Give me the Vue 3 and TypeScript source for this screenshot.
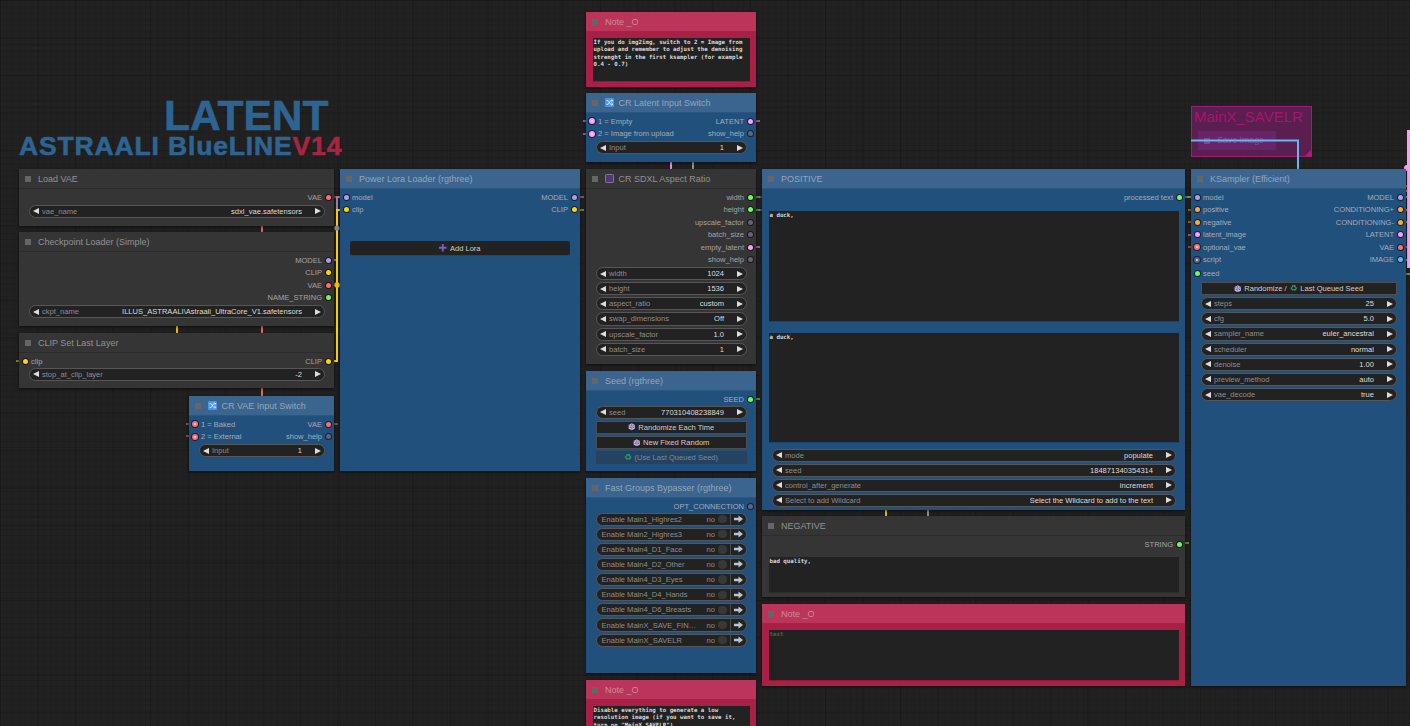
<script setup lang="ts">
type Slot = [string, string, boolean?]
type Row =
  | { k: 'slot'; i?: Slot; o?: Slot; mt?: number }
  | { k: 'gap'; h: number }
  | { k: 'w'; l: string; v: string }
  | { k: 'btn'; parts: string[]; off?: boolean }
  | { k: 'tog'; l: string }
  | { k: 'text'; t: string; h: number; mt: number; dim?: boolean }
  | { k: 'lora' }
interface GraphNode {
  x: number
  y: number
  w: number
  h: number
  title: string
  theme: 'grey' | 'blue' | 'red'
  icon?: 'shuffle' | 'square'
  rows: Row[]
}

const PUR = '#b39ddb'
const YEL = '#ffd500'
const RED = '#ff6e6e'
const GRN = '#6dfa5e'
const PNK = '#ff9cf9'
const ORG = '#ffa931'
const BLU = '#64b5f6'
const GRY = '#62627a'

const nodes: GraphNode[] = [
  { x: 19, y: 169, w: 315, h: 57, title: 'Load VAE', theme: 'grey', rows: [
    { k: 'slot', o: ['VAE', RED] },
    { k: 'w', l: 'vae_name', v: 'sdxl_vae.safetensors' } ] },
  { x: 19, y: 232, w: 315, h: 94, title: 'Checkpoint Loader (Simple)', theme: 'grey', rows: [
    { k: 'slot', o: ['MODEL', PUR] },
    { k: 'slot', o: ['CLIP', YEL] },
    { k: 'slot', o: ['VAE', RED] },
    { k: 'slot', o: ['NAME_STRING', GRN] },
    { k: 'w', l: 'ckpt_name', v: 'ILLUS_ASTRAALI\\Astraali_UltraCore_V1.safetensors' } ] },
  { x: 19, y: 333, w: 315, h: 55, title: 'CLIP Set Last Layer', theme: 'grey', rows: [
    { k: 'slot', i: ['clip', YEL], o: ['CLIP', YEL] },
    { k: 'gap', h: -1 },
    { k: 'w', l: 'stop_at_clip_layer', v: '-2' } ] },
  { x: 189, y: 396, w: 145, h: 75, title: 'CR VAE Input Switch', theme: 'blue', icon: 'shuffle', rows: [
    { k: 'slot', i: ['1 = Baked', RED, true], o: ['VAE', RED] },
    { k: 'slot', i: ['2 = External', RED, true], o: ['show_help', GRY] },
    { k: 'w', l: 'Input', v: '1' } ] },
  { x: 340, y: 169, w: 240, h: 302, title: 'Power Lora Loader (rgthree)', theme: 'blue', rows: [
    { k: 'slot', i: ['model', PUR], o: ['MODEL', PUR] },
    { k: 'slot', i: ['clip', YEL], o: ['CLIP', YEL] },
    { k: 'lora' } ] },
  { x: 586, y: 12, w: 170, h: 75, title: 'Note _O', theme: 'red', rows: [
    { k: 'text', mt: 4, h: 43, t: 'If you do img2img, switch to 2 = Image from upload and remember to adjust the denoising strenght in the first ksampler (for example 0.4 - 0.7)' } ] },
  { x: 586, y: 93, w: 170, h: 69, title: 'CR Latent Input Switch', theme: 'blue', icon: 'shuffle', rows: [
    { k: 'slot', i: ['1 = Empty', PNK, true], o: ['LATENT', PNK] },
    { k: 'slot', i: ['2 = Image from upload', PNK, true], o: ['show_help', GRY] },
    { k: 'w', l: 'Input', v: '1' } ] },
  { x: 586, y: 169, w: 170, h: 195, title: 'CR SDXL Aspect Ratio', theme: 'grey', icon: 'square', rows: [
    { k: 'slot', o: ['width', GRN] },
    { k: 'slot', o: ['height', GRN] },
    { k: 'slot', o: ['upscale_factor', GRY] },
    { k: 'slot', o: ['batch_size', GRY] },
    { k: 'slot', o: ['empty_latent', PNK] },
    { k: 'slot', o: ['show_help', GRY] },
    { k: 'w', l: 'width', v: '1024' },
    { k: 'w', l: 'height', v: '1536' },
    { k: 'w', l: 'aspect_ratio', v: 'custom' },
    { k: 'w', l: 'swap_dimensions', v: 'Off' },
    { k: 'w', l: 'upscale_factor', v: '1.0' },
    { k: 'w', l: 'batch_size', v: '1' } ] },
  { x: 586, y: 371, w: 170, h: 100, title: 'Seed (rgthree)', theme: 'blue', rows: [
    { k: 'slot', o: ['SEED', GRN] },
    { k: 'gap', h: -1 },
    { k: 'w', l: 'seed', v: '770310408238849' },
    { k: 'btn', parts: ['dice', 'Randomize Each Time'] },
    { k: 'btn', parts: ['dice', 'New Fixed Random'] },
    { k: 'btn', parts: ['recycle', '(Use Last Queued Seed)'], off: true } ] },
  { x: 586, y: 478, w: 170, h: 195, title: 'Fast Groups Bypasser (rgthree)', theme: 'blue', rows: [
    { k: 'slot', o: ['OPT_CONNECTION', GRY] },
    { k: 'gap', h: -1 },
    { k: 'tog', l: 'Enable Main1_Highres2' },
    { k: 'tog', l: 'Enable Main2_Highres3' },
    { k: 'tog', l: 'Enable Main4_D1_Face' },
    { k: 'tog', l: 'Enable Main4_D2_Other' },
    { k: 'tog', l: 'Enable Main4_D3_Eyes' },
    { k: 'tog', l: 'Enable Main4_D4_Hands' },
    { k: 'tog', l: 'Enable Main4_D6_Breasts' },
    { k: 'tog', l: 'Enable MainX_SAVE_FIN…' },
    { k: 'tog', l: 'Enable MainX_SAVELR' } ] },
  { x: 586, y: 680, w: 170, h: 75, title: 'Note _O', theme: 'red', rows: [
    { k: 'text', mt: 4, h: 43, t: 'Disable everything to generate a low resolution image (if you want to save it, turn on "MainX_SAVELR")' } ] },
  { x: 762, y: 169, w: 423, h: 341, title: 'POSITIVE', theme: 'blue', rows: [
    { k: 'slot', o: ['processed text', GRN] },
    { k: 'text', mt: 7.5, h: 110, t: 'a duck,' },
    { k: 'text', mt: 12, h: 109, t: 'a duck,' },
    { k: 'gap', h: 5.5 },
    { k: 'w', l: 'mode', v: 'populate' },
    { k: 'w', l: 'seed', v: '184871340354314' },
    { k: 'w', l: 'control_after_generate', v: 'increment' },
    { k: 'w', l: 'Select to add Wildcard', v: 'Select the Wildcard to add to the text' } ] },
  { x: 762, y: 516, w: 423, h: 81, title: 'NEGATIVE', theme: 'grey', rows: [
    { k: 'slot', o: ['STRING', GRN] },
    { k: 'text', mt: 6.5, h: 35, t: 'bad quality,' } ] },
  { x: 762, y: 604, w: 423, h: 82, title: 'Note _O', theme: 'red', rows: [
    { k: 'text', mt: 4, h: 50, t: 'text', dim: true } ] },
  { x: 1191, y: 169, w: 215, h: 517, title: 'KSampler (Efficient)', theme: 'blue', rows: [
    { k: 'slot', i: ['model', PUR], o: ['MODEL', PUR] },
    { k: 'slot', i: ['positive', ORG], o: ['CONDITIONING+', ORG] },
    { k: 'slot', i: ['negative', ORG], o: ['CONDITIONING-', ORG] },
    { k: 'slot', i: ['latent_image', PNK], o: ['LATENT', PNK] },
    { k: 'slot', i: ['optional_vae', RED, true], o: ['VAE', RED] },
    { k: 'slot', i: ['script', GRY, true], o: ['IMAGE', BLU] },
    { k: 'slot', i: ['seed', GRN], mt: 1.5 },
    { k: 'gap', h: 1 },
    { k: 'btn', parts: ['dice', 'Randomize /', 'recycle', 'Last Queued Seed'] },
    { k: 'w', l: 'steps', v: '25' },
    { k: 'w', l: 'cfg', v: '5.0' },
    { k: 'w', l: 'sampler_name', v: 'euler_ancestral' },
    { k: 'w', l: 'scheduler', v: 'normal' },
    { k: 'w', l: 'denoise', v: '1.00' },
    { k: 'w', l: 'preview_method', v: 'auto' },
    { k: 'w', l: 'vae_decode', v: 'true' } ] },
]

const wires: { d: string; c: string; w: number }[] = [
  { d: 'M334 260H337V197H340', c: PUR, w: 1.6 },
  { d: 'M334 361H337V210H340', c: YEL, w: 2 },
  { d: 'M262 226V232M262 326V333M262 388V396', c: RED, w: 1.8 },
  { d: 'M177 326V333', c: YEL, w: 1.8 },
  { d: 'M671 162V169', c: PNK, w: 1.8 },
  { d: 'M693 162V169', c: '#9aa89a', w: 1.8 },
  { d: 'M886 510V516', c: YEL, w: 1.8 },
  { d: 'M928 510V516', c: '#9aa89a', w: 1.8 },
  { d: 'M1191 140.5H1298V169', c: BLU, w: 2 },
  { d: 'M334 197H339', c: RED, w: 1 },
  { d: 'M186 424H189M186 436H189', c: RED, w: 1 },
  { d: 'M16 361H19', c: YEL, w: 1 },
  { d: 'M334 424H338', c: '#999', w: 1 },
  { d: 'M580 197H584', c: '#aaa', w: 1 },
  { d: 'M580 210H584', c: YEL, w: 1 },
  { d: 'M583 121H586M583 134H586M756 121H760M756 247H760', c: PNK, w: 1 },
  { d: 'M756 197H760M756 210H760M756 399H760M1185 197H1191M1185 543H1189', c: GRN, w: 1 },
  { d: 'M759 197H762M759 210H762', c: '#888', w: 1 },
  { d: 'M1188 197H1191', c: PUR, w: 1 },
  { d: 'M1188 210H1191M1188 222H1191', c: ORG, w: 1 },
  { d: 'M1188 235H1191', c: PNK, w: 1 },
  { d: 'M1188 247H1191', c: RED, w: 1 },
  { d: 'M1406 197H1410', c: PUR, w: 1.6 },
  { d: 'M1406 210H1410M1406 222H1410', c: ORG, w: 1.6 },
  { d: 'M1406 247H1410', c: RED, w: 1.6 },
  { d: 'M1406 260H1410', c: BLU, w: 1.6 },
  { d: 'M1406 274H1410', c: '#8a9a8a', w: 1.6 },
  { d: 'M1406 186H1410', c: RED, w: 1.4 },
  { d: 'M1406 191H1410', c: ORG, w: 1.4 },
  { d: 'M1408.5 130V268', c: PNK, w: 3 },
]

function pos(n: GraphNode) {
  return { left: n.x + 'px', top: n.y + 'px', width: n.w + 'px', height: n.h + 'px' }
}
</script>

<template>
  <div class="canvas">
    <div class="label latent">LATENT</div>
    <div class="label brand">ASTRAALI BlueLINE<span class="ver">V14</span></div>

    <div class="group">
      <div class="group-title">MainX_SAVELR</div>
      <div class="ghost"><i class="ghost-box"></i>Save Image</div>
      <i class="corner"></i>
    </div>

    <svg class="wires" width="1410" height="726" viewBox="0 0 1410 726" fill="none">
      <path v-for="(w, i) in wires" :key="i" :d="w.d" :stroke="w.c" :stroke-width="w.w" />
      <circle cx="337" cy="228" r="2.6" fill="#8f80b0" />
      <circle cx="337" cy="285" r="2.8" fill="#ffc400" />
      <circle cx="1407" cy="168" r="3" fill="#ff9cf9" />
    </svg>

    <section v-for="(n, ni) in nodes" :key="ni" class="node" :class="n.theme" :style="pos(n)">
      <header class="title">
        <i class="box"></i>
        <svg v-if="n.icon === 'shuffle'" class="ticon" viewBox="0 0 10 10">
          <rect width="10" height="10" rx="1.2" fill="#4f94e0" />
          <path d="M1.5 3H3.5L6.3 7H8.5M1.5 7H3.5L6.3 3H8.5M7.3 1.8L8.7 3L7.3 4.2M7.3 5.8L8.7 7L7.3 8.2" stroke="#e8f2ff" stroke-width=".9" fill="none" />
        </svg>
        <svg v-if="n.icon === 'square'" class="ticon" viewBox="0 0 10 10">
          <rect x=".5" y=".5" width="9" height="9" rx="1" fill="#4c3a70" stroke="#8d7fa6" />
        </svg>
        <span class="tname">{{ n.title }}</span>
      </header>
      <div class="body">
        <template v-for="(r, ri) in n.rows" :key="ri">
          <div v-if="r.k === 'slot'" class="slot" :style="r.mt ? { marginTop: r.mt + 'px' } : undefined">
            <span v-if="r.i" class="side">
              <i class="dot" :class="{ ring: r.i[2] }" :style="{ '--c': r.i[1] }"></i>{{ r.i[0] }}
            </span>
            <span v-if="r.o" class="side end">
              {{ r.o[0] }}<i class="dot" :style="{ '--c': r.o[1] }"></i>
            </span>
          </div>

          <div v-else-if="r.k === 'gap'" class="gap" :style="{ marginTop: r.h + 'px' }"></div>

          <div v-else-if="r.k === 'w'" class="wrow">
            <div class="pill">
              <i class="tri left"></i>
              <span class="wl">{{ r.l }}</span>
              <span class="wv">{{ r.v }}</span>
              <i class="tri right"></i>
            </div>
          </div>

          <div v-else-if="r.k === 'btn'" class="wrow">
            <div class="btn" :class="{ off: r.off }">
              <template v-for="(p, pi) in r.parts" :key="pi">
                <svg v-if="p === 'dice'" class="dice" viewBox="0 0 8 8">
                  <path d="M4 .3L7.3 2V6L4 7.7L.7 6V2Z" fill="#c6b6e6" />
                  <path d="M4 4V7.7M.7 2L4 4L7.3 2" stroke="#6d5a90" stroke-width=".6" fill="none" />
                  <circle cx="4" cy="2" r=".6" fill="#4b3a6d" />
                  <circle cx="2.3" cy="4.6" r=".6" fill="#4b3a6d" />
                  <circle cx="5.7" cy="4.6" r=".6" fill="#4b3a6d" />
                </svg>
                <span v-else-if="p === 'recycle'" class="recycle">♻</span>
                <span v-else>{{ p }}</span>
              </template>
            </div>
          </div>

          <div v-else-if="r.k === 'tog'" class="wrow">
            <div class="pill tog">
              <span class="tl">{{ r.l }}</span>
              <span class="tno">no</span>
              <i class="knob"></i>
              <i class="sep"></i>
              <svg class="arrow" viewBox="0 0 10 8">
                <path d="M0 2.6H5V0L10 4L5 8V5.4H0Z" fill="#b4c6da" />
              </svg>
            </div>
          </div>

          <div
            v-else-if="r.k === 'text'"
            class="area"
            :class="{ dim: r.dim }"
            :style="{ height: r.h + 'px', marginTop: r.mt + 'px' }"
          >{{ r.t }}</div>

          <div v-else class="lora">
            <svg class="plus" viewBox="0 0 8 8"><path d="M3 0H5V3H8V5H5V8H3V5H0V3H3Z" fill="#7b5fc0" /></svg>
            Add Lora
          </div>
        </template>
      </div>
    </section>
  </div>
</template>

<style scoped>
.canvas {
  position: relative;
  width: 1410px;
  height: 726px;
  overflow: hidden;
  font-family: "Liberation Sans", Arial, sans-serif;
  font-size: 7.56px;
  background-color: #212121;
  background-image:
    linear-gradient(to right, rgba(0, 0, 0, 0.16) 1px, transparent 1px),
    linear-gradient(to bottom, rgba(0, 0, 0, 0.16) 1px, transparent 1px),
    linear-gradient(to right, rgba(0, 0, 0, 0.08) 1px, transparent 1px),
    linear-gradient(to bottom, rgba(0, 0, 0, 0.08) 1px, transparent 1px);
  background-size: 37.5px 37.5px, 37.5px 37.5px, 6.3px 6.3px, 6.3px 6.3px;
}
.label {
  position: absolute;
  font-weight: 700;
  white-space: nowrap;
  color: #2e6491;
  line-height: 0.75;
  -webkit-text-stroke: 0.6px currentColor;
}
.latent {
  left: 164px;
  top: 100px;
  font-size: 42.5px;
}
.brand {
  left: 19px;
  top: 137px;
  font-size: 26.5px;
  letter-spacing: 0.85px;
}
.ver {
  color: #a8243f;
}
.group {
  position: absolute;
  left: 1191px;
  top: 106px;
  width: 121px;
  height: 51px;
  box-sizing: border-box;
  border: 1px solid #9d1f70;
  background: #5a1e50;
}
.group-title {
  color: #a3186f;
  font-size: 15px;
  line-height: 19px;
  padding-left: 2px;
}
.ghost {
  position: absolute;
  left: 6px;
  top: 24px;
  width: 78px;
  height: 19px;
  background: #682468;
  color: #85548c;
  font-size: 8.8px;
  line-height: 19px;
  display: flex;
  align-items: center;
  gap: 7px;
  padding-left: 6px;
  box-sizing: border-box;
}
.ghost-box {
  width: 6px;
  height: 6px;
  background: #7a4a80;
}
.corner {
  position: absolute;
  right: 0;
  bottom: 0;
  border-style: solid;
  border-width: 0 0 6px 6px;
  border-color: transparent transparent #b5187c transparent;
}
.wires {
  position: absolute;
  left: 0;
  top: 0;
}
.node {
  position: absolute;
  box-shadow: 0 1px 3px rgba(0, 0, 0, 0.6);
  color: #a4a4a4;
  --tbg: #353535;
  --bbg: #353535;
  --line: #2c2c2c;
  --tc: #929292;
}
.node.blue {
  --tbg: #3b658f;
  --bbg: #22507c;
  --line: #2a567f;
  --tc: #94a6b8;
  color: #a2acb8;
}
.node.red {
  --tbg: #bb3459;
  --bbg: #a82046;
  --line: #a12646;
  --tc: #d08a9c;
}
.title {
  height: 19px;
  border-bottom: 1px solid var(--line);
  background: var(--tbg);
  color: var(--tc);
  display: flex;
  align-items: center;
  font-size: 9px;
  padding-left: 6px;
  white-space: nowrap;
}
.box {
  width: 6px;
  height: 6px;
  background: #666;
  flex: none;
  margin-right: 7px;
}
.ticon {
  width: 9px;
  height: 9px;
  flex: none;
  margin-right: 4.5px;
}
.body {
  background: var(--bbg);
  height: calc(100% - 20px);
  padding-top: 2px;
  box-sizing: border-box;
  display: flex;
  flex-direction: column;
}
.gap {
  flex: none;
}
.slot {
  height: 12.5px;
  flex: none;
  display: flex;
  align-items: center;
  justify-content: space-between;
  padding: 0 3.5px;
}
.side {
  display: flex;
  align-items: center;
  gap: 3.5px;
  white-space: nowrap;
}
.end {
  margin-left: auto;
}
.dot {
  width: 5px;
  height: 5px;
  border-radius: 50%;
  background: var(--c);
  box-shadow: 0 0 0 1px rgba(0, 0, 0, 0.55);
  flex: none;
}
.dot.ring {
  width: 6px;
  height: 6px;
  margin: 0 -0.5px;
  background: #e8dcdc;
  box-sizing: border-box;
  border: 2px solid var(--c);
}
.wrow {
  height: 15.15px;
  flex: none;
  padding: 1px 9.5px;
  box-sizing: border-box;
}
.pill {
  height: 13.15px;
  box-sizing: border-box;
  border: 1px solid #565656;
  border-radius: 7px;
  background: #222;
  display: flex;
  align-items: center;
  padding: 0 3px 0 3.5px;
  white-space: nowrap;
}
.tri {
  width: 0;
  height: 0;
  border-style: solid;
  flex: none;
}
.tri.left {
  border-width: 3.5px 6px 3.5px 0;
  border-color: transparent #ddd transparent transparent;
}
.tri.right {
  border-width: 3.5px 0 3.5px 6px;
  border-color: transparent transparent transparent #ddd;
}
.wl {
  color: #8e8e8e;
  margin-left: 3px;
  flex: 1;
}
.wv {
  color: #ddd;
  margin-right: 12.5px;
}
.btn {
  height: 13.15px;
  box-sizing: border-box;
  border: 1px solid #4e4e4e;
  background: #222;
  color: #cfcfcf;
  display: flex;
  align-items: center;
  justify-content: center;
  gap: 3px;
  white-space: nowrap;
}
.btn.off {
  border-color: transparent;
  background: #254260;
  color: #6e8ea6;
}
.dice {
  width: 7.5px;
  height: 7.5px;
}
.recycle {
  font-family: "DejaVu Sans", sans-serif;
  font-size: 8.5px;
  color: #2b9f72;
  line-height: 1;
}
.tog {
  padding: 0 3px 0 5px;
}
.tl {
  color: #8e8e8e;
  flex: 1;
}
.tno {
  color: #8e8e8e;
}
.knob {
  width: 8.5px;
  height: 8.5px;
  border-radius: 50%;
  background: #383838;
  margin: 0 3px;
  flex: none;
}
.sep {
  width: 1px;
  align-self: stretch;
  background: #484848;
  flex: none;
  margin-right: 3px;
}
.arrow {
  width: 9px;
  height: 8px;
  flex: none;
}
.area {
  margin-left: 6.5px;
  margin-right: 6px;
  flex: none;
  background: #222;
  color: #dadada;
  font-family: "DejaVu Sans Mono", "Liberation Mono", monospace;
  font-size: 5.75px;
  font-weight: 700;
  line-height: 7.4px;
  padding: 1px 1px;
  box-sizing: border-box;
  box-shadow: 0 1px 0 rgba(0, 0, 0, 0.15);
}
.area.dim {
  color: #5a5a5a;
}
.lora {
  height: 14px;
  margin: 25px 10px 0;
  flex: none;
  border-radius: 2px;
  background: #222;
  box-shadow: 0 1px 0 #3f3f3f;
  display: flex;
  align-items: center;
  justify-content: center;
  gap: 3px;
  color: #cfcfcf;
}
.plus {
  width: 7.5px;
  height: 7.5px;
}
</style>

<style>
html,
body {
  margin: 0;
  background: #212121;
  overflow: hidden;
}
</style>
